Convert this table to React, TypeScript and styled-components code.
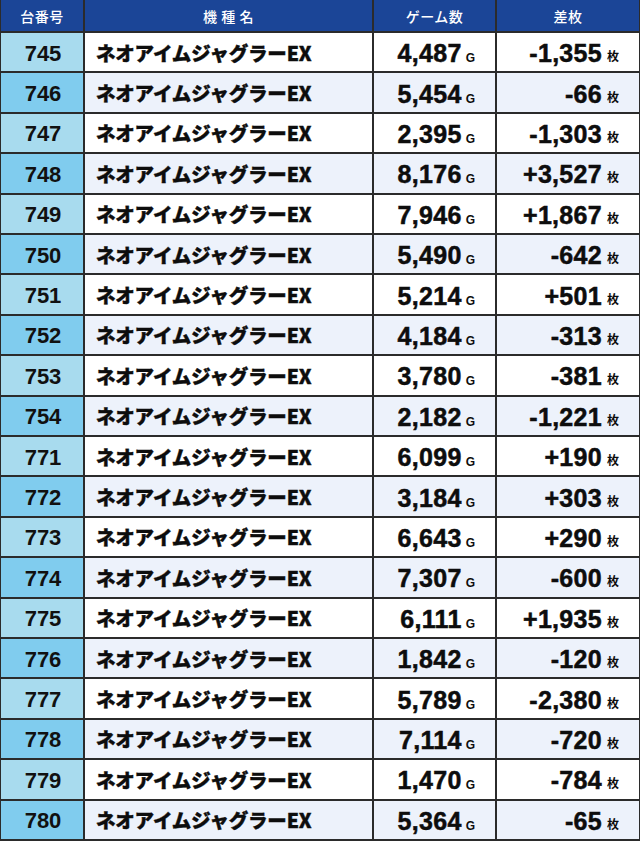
import React from 'react';
import styled, { createGlobalStyle, css } from 'styled-components';

interface Machine {
  no: number,
  games: string,
  diff: string,
}

const machines: Machine[] = [
  { no: 745, games: '4,487', diff: '-1,355' },
  { no: 746, games: '5,454', diff: '-66' },
  { no: 747, games: '2,395', diff: '-1,303' },
  { no: 748, games: '8,176', diff: '+3,527' },
  { no: 749, games: '7,946', diff: '+1,867' },
  { no: 750, games: '5,490', diff: '-642' },
  { no: 751, games: '5,214', diff: '+501' },
  { no: 752, games: '4,184', diff: '-313' },
  { no: 753, games: '3,780', diff: '-381' },
  { no: 754, games: '2,182', diff: '-1,221' },
  { no: 771, games: '6,099', diff: '+190' },
  { no: 772, games: '3,184', diff: '+303' },
  { no: 773, games: '6,643', diff: '+290' },
  { no: 774, games: '7,307', diff: '-600' },
  { no: 775, games: '6,111', diff: '+1,935' },
  { no: 776, games: '1,842', diff: '-120' },
  { no: 777, games: '5,789', diff: '-2,380' },
  { no: 778, games: '7,114', diff: '-720' },
  { no: 779, games: '1,470', diff: '-784' },
  { no: 780, games: '5,364', diff: '-65' },
];

const MODEL = 'ネオアイムジャグラーEX';

const GlobalStyle = createGlobalStyle`
  html, body {
    margin: 0;
    padding: 0;
    background: #ffffff;
  }
`;

const Table = styled.div`
  width: 640px;
  height: 841px;
  box-sizing: border-box;
  display: grid;
  grid-template-columns: 82px 287px 121px 142px;
  grid-template-rows: 31px repeat(20, 1fr);
  gap: 2px;
  padding: 0 2px 2px 1px;
  background: #2b2b2b;
`;

const HeadCell = styled.div`
  background: #1b4597;
  color: #ffffff;
  display: flex;
  align-items: center;
  justify-content: center;
  font-family: "Noto Sans CJK JP", "Noto Sans", sans-serif;
  font-size: 14px;
  font-weight: 500;
  letter-spacing: 0.5px;
`;

interface StripeProps {
  $even: boolean,
}

const NoCell = styled.div<StripeProps>`
  background: ${(props) => (props.$even ? '#80ccee' : '#a8dbee')};
  display: flex;
  align-items: center;
  justify-content: center;
  font-family: "Liberation Sans", Arial, sans-serif;
  font-size: 22px;
  font-weight: 700;
  line-height: 1;
  color: #111111;
  padding: 3px 0 0 2px;
`;

const bodyCell = css<StripeProps>`
  background: ${(props) => (props.$even ? '#edf2fb' : '#ffffff')};
  display: flex;
  align-items: center;
  color: #0d0d0d;
`;

const NameCell = styled.div<StripeProps>`
  ${bodyCell};
  padding-left: 11px;
  font-family: "Noto Sans CJK JP", "Noto Sans", sans-serif;
  font-size: 19.5px;
  font-weight: 900;
  letter-spacing: -0.2px;
  -webkit-text-stroke: 0.4px #0d0d0d;
`;

const ValueCell = styled.div<StripeProps>`
  ${bodyCell};
  justify-content: flex-end;
  padding-right: 20px;
`;

const Figure = styled.div`
  display: flex;
  align-items: baseline;
  padding-top: 3px;
`;

const Value = styled.span`
  font-family: "Liberation Sans", Arial, sans-serif;
  font-size: 25px;
  font-weight: 700;
  letter-spacing: 0.3px;
  line-height: 1;
  -webkit-text-stroke: 0.5px #0d0d0d;
`;

interface UnitProps {
  $gap: number,
  $lift: number,
}

const Unit = styled.span<UnitProps>`
  margin-left: ${(props) => props.$gap}px;
  transform: translateY(-${(props) => props.$lift}px);
  font-family: "Liberation Sans", "Noto Sans CJK JP", sans-serif;
  font-size: 12px;
  font-weight: 700;
  line-height: 1;
`;

export default function App() {
  return (
    <>
      <GlobalStyle />
      <Table>
        <HeadCell>台番号</HeadCell>
        <HeadCell>機 種 名</HeadCell>
        <HeadCell>ゲーム数</HeadCell>
        <HeadCell>差枚</HeadCell>
        {machines.map((m, i) => {
          const even = i % 2 === 1;
          return (
            <React.Fragment key={m.no}>
              <NoCell $even={even}>{m.no}</NoCell>
              <NameCell $even={even}>{MODEL}</NameCell>
              <ValueCell $even={even}>
                <Figure>
                  <Value>{m.games}</Value>
                  <Unit $gap={4} $lift={0}>G</Unit>
                </Figure>
              </ValueCell>
              <ValueCell $even={even}>
                <Figure>
                  <Value>{m.diff}</Value>
                  <Unit $gap={5} $lift={1}>枚</Unit>
                </Figure>
              </ValueCell>
            </React.Fragment>
          );
        })}
      </Table>
    </>
  );
}
